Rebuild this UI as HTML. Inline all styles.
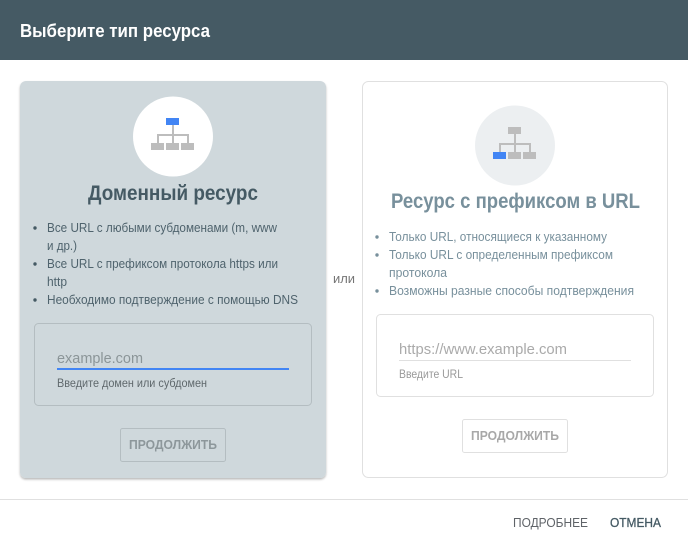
<!DOCTYPE html>
<html lang="ru">
<head>
<meta charset="utf-8">
<title>Выберите тип ресурса</title>
<style>
html,body{margin:0;padding:0;background:#fff;width:688px;height:545px;overflow:hidden}
svg{display:block;font-family:"Liberation Sans",sans-serif}
</style>
</head>
<body>
<svg width="688" height="545" viewBox="0 0 688 545" xmlns="http://www.w3.org/2000/svg">
<defs>
<filter id="s" x="-10%" y="-10%" width="120%" height="120%">
<feDropShadow dx="0" dy="1.5" stdDeviation="1.1" flood-color="#000" flood-opacity=".28"/>
</filter>
</defs>
<rect width="688" height="545" fill="#fff"/>
<rect width="688" height="60" fill="#455a64"/>
<text x="20" y="37" font-size="18" font-weight="700" fill="#fff" textLength="190" lengthAdjust="spacingAndGlyphs">Выберите тип ресурса</text>

<!-- left card -->
<rect x="20" y="81" width="306" height="397" rx="6" fill="#cfd8dc" filter="url(#s)"/>
<circle cx="173" cy="136.5" r="40" fill="#fff"/>
<g fill="#bdbdbd">
<rect x="172" y="125" width="2" height="18"/>
<rect x="157" y="134" width="32" height="2"/>
<rect x="157" y="134" width="2" height="9"/>
<rect x="187" y="134" width="2" height="9"/>
<rect x="151" y="143" width="13" height="7"/>
<rect x="166" y="143" width="13" height="7"/>
<rect x="181" y="143" width="13" height="7"/>
</g>
<rect x="166" y="118" width="13" height="7" fill="#4285f4"/>
<text x="88" y="200" font-size="21" font-weight="700" fill="#455a64" textLength="170" lengthAdjust="spacingAndGlyphs">Доменный ресурс</text>
<g fill="#455a64">
<circle cx="35" cy="228" r="1.7"/><circle cx="35" cy="264" r="1.7"/><circle cx="35" cy="300" r="1.7"/>
</g>
<g font-size="12.5" fill="#4f636d">
<text x="47" y="232" textLength="230" lengthAdjust="spacingAndGlyphs">Все URL с любыми субдоменами (m, www</text>
<text x="47" y="250" textLength="30" lengthAdjust="spacingAndGlyphs">и др.)</text>
<text x="47" y="268" textLength="231" lengthAdjust="spacingAndGlyphs">Все URL с префиксом протокола https или</text>
<text x="47" y="286" textLength="20" lengthAdjust="spacingAndGlyphs">http</text>
<text x="47" y="304" textLength="251" lengthAdjust="spacingAndGlyphs">Необходимо подтверждение с помощью DNS</text>
</g>
<rect x="34.5" y="323.5" width="277" height="82" rx="4" fill="none" stroke="#b4bdc1"/>
<text x="57" y="363" font-size="15" fill="#8b9598" textLength="86" lengthAdjust="spacingAndGlyphs">example.com</text>
<rect x="57" y="368" width="232" height="2" fill="#4285f4"/>
<text x="57" y="387" font-size="11.5" fill="#5f686c" textLength="150" lengthAdjust="spacingAndGlyphs">Введите домен или субдомен</text>
<rect x="120.5" y="428.5" width="105" height="33" rx="2" fill="none" stroke="#b4bdc1"/>
<text x="129" y="449" font-size="13" font-weight="700" fill="#8d979b" textLength="88" lengthAdjust="spacingAndGlyphs">ПРОДОЛЖИТЬ</text>

<text x="333" y="283" font-size="12.5" fill="#757575" textLength="22" lengthAdjust="spacingAndGlyphs">или</text>

<!-- right card -->
<rect x="362.5" y="81.5" width="305" height="396" rx="6" fill="#fff" stroke="#e0e0e0"/>
<circle cx="515" cy="145.5" r="40" fill="#eceff1"/>
<g fill="#bdbdbd">
<rect x="514" y="134" width="2" height="18"/>
<rect x="499" y="143" width="32" height="2"/>
<rect x="499" y="143" width="2" height="9"/>
<rect x="529" y="143" width="2" height="9"/>
<rect x="508" y="127" width="13" height="7"/>
<rect x="508" y="152" width="13" height="7"/>
<rect x="523" y="152" width="13" height="7"/>
</g>
<rect x="493" y="152" width="13" height="7" fill="#4285f4"/>
<text x="391" y="208" font-size="21" font-weight="700" fill="#78909c" textLength="249" lengthAdjust="spacingAndGlyphs">Ресурс с префиксом в URL</text>
<g fill="#78909c">
<circle cx="377" cy="237" r="1.7"/><circle cx="377" cy="255" r="1.7"/><circle cx="377" cy="291" r="1.7"/>
</g>
<g font-size="12.5" fill="#78909c">
<text x="389" y="241" textLength="218" lengthAdjust="spacingAndGlyphs">Только URL, относящиеся к указанному</text>
<text x="389" y="259" textLength="224" lengthAdjust="spacingAndGlyphs">Только URL с определенным префиксом</text>
<text x="389" y="277" textLength="58" lengthAdjust="spacingAndGlyphs">протокола</text>
<text x="389" y="295" textLength="245" lengthAdjust="spacingAndGlyphs">Возможны разные способы подтверждения</text>
</g>
<rect x="376.5" y="314.5" width="277" height="82" rx="4" fill="none" stroke="#e0e0e0"/>
<text x="399" y="354" font-size="15" fill="#aaa" textLength="168" lengthAdjust="spacingAndGlyphs">https://www.example.com</text>
<rect x="399" y="360" width="232" height="1" fill="#e0e0e0"/>
<text x="399" y="378" font-size="11.5" fill="#999" textLength="64" lengthAdjust="spacingAndGlyphs">Введите URL</text>
<rect x="462.5" y="419.5" width="105" height="33" rx="2" fill="none" stroke="#e0e0e0"/>
<text x="471" y="440" font-size="13" font-weight="700" fill="#a8a8a8" textLength="88" lengthAdjust="spacingAndGlyphs">ПРОДОЛЖИТЬ</text>

<!-- footer -->
<rect x="0" y="499" width="688" height="1" fill="#e0e0e0"/>
<text x="513" y="527" font-size="13" fill="#5f6368" textLength="75" lengthAdjust="spacingAndGlyphs">ПОДРОБНЕЕ</text>
<text x="610" y="527" font-size="13" fill="#455a64" stroke="#455a64" stroke-width=".3" textLength="51" lengthAdjust="spacingAndGlyphs">ОТМЕНА</text>
</svg>
</body>
</html>
